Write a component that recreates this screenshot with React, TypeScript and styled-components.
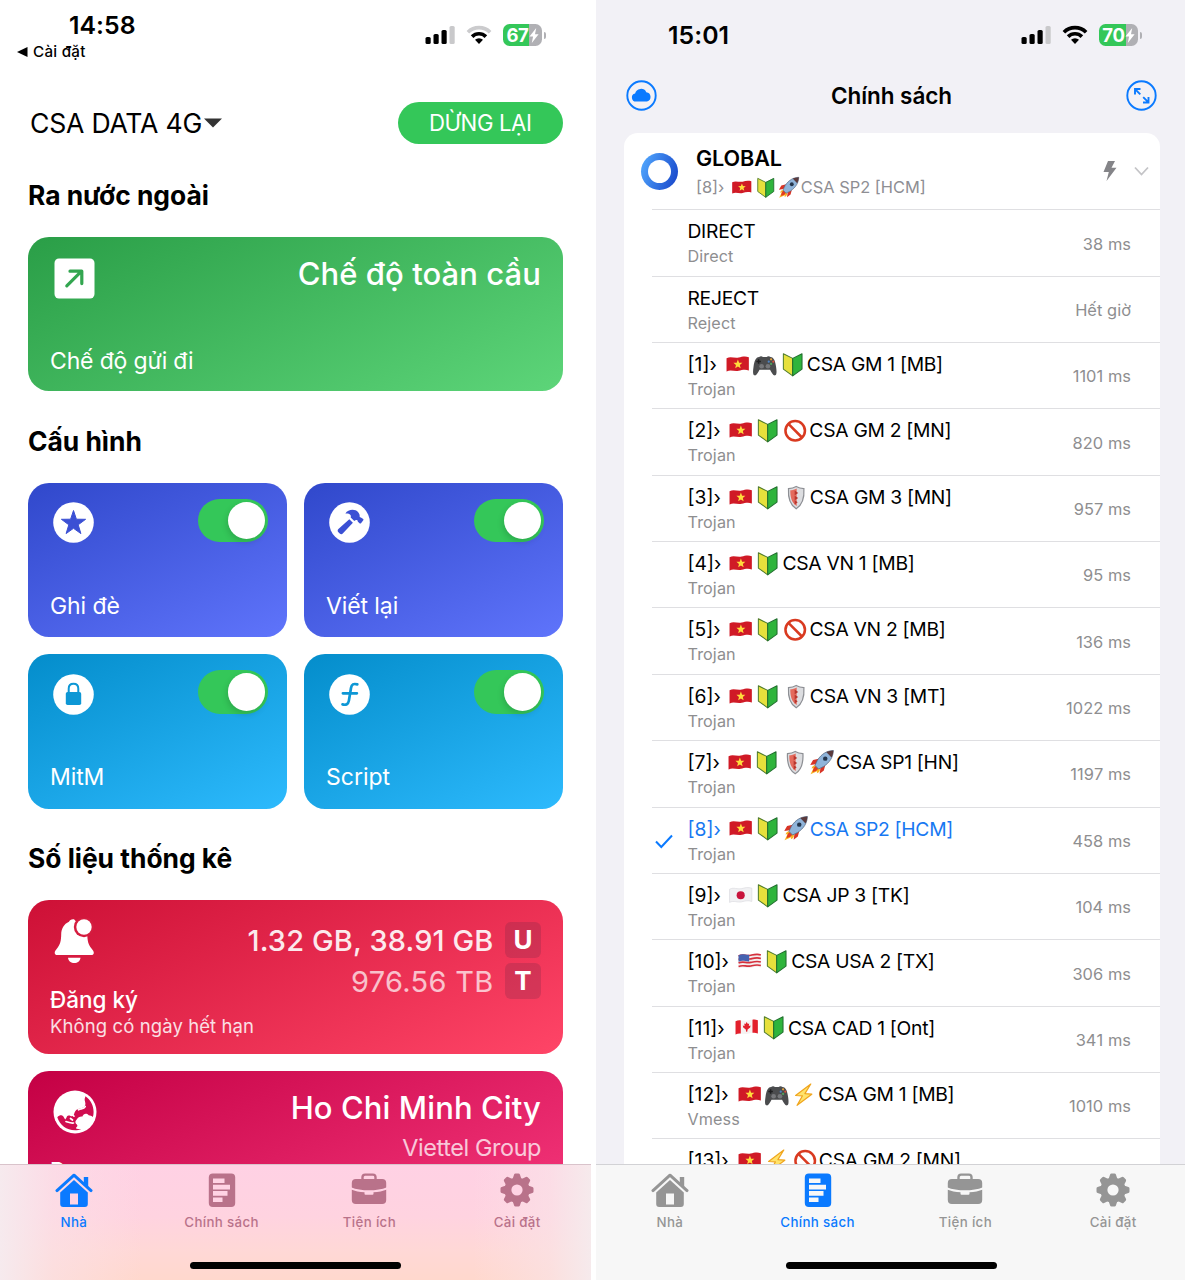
import React from "react";
import styled, { createGlobalStyle } from "styled-components";

const GlobalStyle = createGlobalStyle`
  * { box-sizing: border-box; }
  body {
    margin: 0;
    background: #fff;
    font-family: Inter, "Noto Sans", sans-serif;
    color: #000;
    overflow: hidden;
  }
  svg { display: block; flex: none; }
`;

/* ---------- shared pieces ---------- */

interface TextProps {
  $size: number;
  $line: number;
  $weight?: number;
  $track?: number;
  $color?: string;
}

const Text = styled.div<TextProps>`
  font-size: ${(p) => p.$size}px;
  line-height: ${(p) => p.$line}px;
  font-weight: ${(p) => p.$weight ?? 400};
  letter-spacing: ${(p) => p.$track ?? 0}px;
  color: ${(p) => p.$color ?? "inherit"};
  white-space: nowrap;
`;

const Stage = styled.div`
  display: grid;
  grid-template-columns: 596px 589px;
  width: 1185px;
  height: 1280px;
  overflow: hidden;
`;

const Phone = styled.section<{ $bg: string; $width: number }>`
  display: flex;
  flex-direction: column;
  width: ${(p) => p.$width}px;
  height: 1280px;
  background: ${(p) => p.$bg};
`;

const Scroll = styled.div<{ $pad: string }>`
  flex: 1;
  min-height: 0;
  overflow: hidden;
  padding: ${(p) => p.$pad};
`;

const StatusBar = styled.header<{ $left: number; $right: number }>`
  display: flex;
  justify-content: space-between;
  height: 71px;
  padding: 0 ${(p) => p.$right}px 0 ${(p) => p.$left}px;
  flex: none;
`;

const StatusIcons = styled.div`
  display: flex;
  align-items: center;
  height: 70px;
`;

const Clock = styled.div<{ $pad: number }>`
  padding-top: ${(p) => p.$pad}px;
`;

const BackLink = styled.div`
  display: flex;
  align-items: center;
  gap: 5px;
  padding-top: 1px;
`;

const ClockInset = styled.div`
  padding-left: 52px;
`;

const Battery = styled.div<{ $level: number }>`
  display: flex;
  align-items: center;
  justify-content: center;
  width: 39px;
  height: 21.5px;
  border-radius: 6.5px;
  background: linear-gradient(
    90deg,
    #34c759 ${(p) => p.$level}%,
    #b0b0b4 ${(p) => p.$level}%
  );
  color: #fff;
`;

const BatteryCap = styled.div`
  width: 2.5px;
  height: 7px;
  margin-left: 1.5px;
  border-radius: 0 3px 3px 0;
  background: #b0b0b4;
`;

const Gap = styled.div<{ $w: number }>`
  width: ${(p) => p.$w}px;
`;

const SignalIcon = () => (
  <svg width="30" height="20" viewBox="0 0 30 20">
    <rect x="0.5" y="12" width="5.2" height="7" rx="1.6" />
    <rect x="8.5" y="9" width="5.2" height="10" rx="1.6" />
    <rect x="16.5" y="5" width="5.2" height="14" rx="1.6" />
    <rect x="24.5" y="1" width="5.2" height="18" rx="1.6" fill="#c9c9cb" />
  </svg>
);

const WifiIcon = ({ weak }: { weak?: boolean }) => (
  <svg width="26" height="20" viewBox="0 0 26 20" fill="none" strokeWidth="3.7">
    <path d="M1.9 7.2a15.8 15.8 0 0 1 22.2 0" stroke={weak ? "#cbcbcd" : "#000"} />
    <path d="M6.1 11.6a9.8 9.8 0 0 1 13.8 0" stroke="#000" />
    <path d="M9 14.8a5.8 5.8 0 0 1 8 0L13 19z" fill="#000" />
  </svg>
);

const ChargeBolt = () => (
  <svg width="10" height="15" viewBox="0 0 10 15" fill="#fff">
    <path d="M7.2 0 0.5 8.4h3.6L2.8 15l6.8-8.8H6z" />
  </svg>
);

const PhoneStatus = ({ level, weak }: { level: number; weak?: boolean }) => (
  <StatusIcons>
    <SignalIcon />
    <Gap $w={11} />
    <WifiIcon weak={weak} />
    <Gap $w={11} />
    <Battery $level={level}>
      <Text $size={18.5} $line={21} $weight={700} $track={-0.3}>{level}</Text>
      <ChargeBolt />
    </Battery>
    <BatteryCap />
  </StatusIcons>
);

/* ---------- tab bar ---------- */

const TabBar = styled.nav<{ $tinted?: boolean }>`
  display: flex;
  flex-direction: column;
  align-items: center;
  flex: none;
  width: 591px;
  height: 116px;
  border-top: 1px solid ${(p) => (p.$tinted ? "#d9c3cb" : "#d2d2d5")};
  background: ${(p) =>
    p.$tinted
      ? `linear-gradient(90deg, #f6eaee 0%, rgba(250,226,232,0.6) 9%, rgba(252,220,228,0) 24%, rgba(252,220,228,0) 80%, rgba(249,228,232,0.6) 93%, #f6eaec 100%),
         linear-gradient(180deg, #ffd1e4 0%, #ffd3e0 45%, #ffd8d6 75%, #ffd8cd 100%)`
      : "#f7f7f7"};
`;

const Tabs = styled.div`
  display: grid;
  grid-template-columns: repeat(4, 1fr);
  width: 100%;
  height: 97px;
`;

const Tab = styled.div<{ $color: string }>`
  display: flex;
  flex-direction: column;
  align-items: center;
  padding-top: 7px;
  color: ${(p) => p.$color};
`;

const HomeIndicator = styled.div`
  width: 211px;
  height: 7px;
  border-radius: 4px;
  background: #000;
`;

type TabIconProps = { hole: string };

const HouseIcon = ({ hole }: TabIconProps) => (
  <svg width="38" height="36" viewBox="0 0 38 36">
    <path d="M2 18.6 19 3.2l17 15.4" fill="none" stroke="currentColor" strokeWidth="3" strokeLinecap="round" strokeLinejoin="round" />
    <path d="M28.8 5h4.4v11l-4.4-4z" fill="currentColor" />
    <path d="M19 8 5.2 20.4V32a3 3 0 0 0 3 3h21.6a3 3 0 0 0 3-3V20.4z" fill="currentColor" />
    <rect x="15" y="21.5" width="8" height="11" fill={hole} />
  </svg>
);

const PolicyIcon = ({ hole }: TabIconProps) => (
  <svg width="28" height="36" viewBox="0 0 28 36">
    <rect x="0.8" y="1.5" width="26.4" height="33.5" rx="4" fill="currentColor" />
    <path d="M5 6.5h11.5v4.6H5zM5 12.8h17v4.6H5zM5 19.1h14.5v4.6H5zM5 25.4h9.5V30H5z" fill={hole} />
  </svg>
);

const ToolsIcon = ({ hole }: TabIconProps) => (
  <svg width="36" height="36" viewBox="0 0 36 36">
    <path d="M11.5 8V5.2a2.6 2.6 0 0 1 2.6-2.6h7.8a2.6 2.6 0 0 1 2.6 2.6V8" fill="none" stroke="currentColor" strokeWidth="2.4" />
    <rect x="0.8" y="7" width="34.4" height="25" rx="4" fill="currentColor" />
    <path d="M0 15.2C10 19.4 26 19.4 36 15.2v2.2c-4 1.6-8.6 2.5-13.5 2.8v1.6a1 1 0 0 1-1 1h-7a1 1 0 0 1-1-1v-1.6C8.6 19.9 4 19 0 17.4z" fill={hole} />
  </svg>
);

const GearIcon = ({ hole }: TabIconProps) => (
  <svg width="36" height="36" viewBox="-18 -18 36 36" fill="currentColor">
    <circle r="12.6" />
    {[0, 45, 90, 135].map((deg) => (
      <path key={deg} transform={`rotate(${deg})`} d="M-4.4 -11 -2.9 -15.4a1.5 1.5 0 0 1 1.5-1.1h2.8a1.5 1.5 0 0 1 1.5 1.1L4.4-11V11L2.9 15.4a1.5 1.5 0 0 1-1.5 1.1h-2.8a1.5 1.5 0 0 1-1.5-1.1L-4.4 11z" />
    ))}
    <circle r="5.6" fill={hole} />
  </svg>
);

const tabs = [
  { label: "Nhà", Icon: HouseIcon },
  { label: "Chính sách", Icon: PolicyIcon },
  { label: "Tiện ích", Icon: ToolsIcon },
  { label: "Cài đặt", Icon: GearIcon },
];

const BottomTabs = ({ active, tinted }: { active: number; tinted?: boolean }) => (
  <TabBar $tinted={tinted}>
    <Tabs>
      {tabs.map(({ label, Icon }, i) => (
        <Tab key={label} $color={i === active ? "#0a7aff" : tinted ? "#b9728a" : "#959595"}>
          <Icon hole={tinted ? "#ffd3e4" : "#f7f7f7"} />
          <Text $size={13.3} $line={28} $weight={500} $track={0.35}>{label}</Text>
        </Tab>
      ))}
    </Tabs>
    <HomeIndicator />
  </TabBar>
);

/* ---------- home screen ---------- */

const TopRow = styled.div`
  display: flex;
  align-items: center;
  justify-content: space-between;
  height: 42px;
  padding-left: 2px;
`;

const Profile = styled.div`
  display: flex;
  align-items: center;
  gap: 2px;
`;

const StopButton = styled.button`
  display: flex;
  align-items: center;
  justify-content: center;
  width: 165.5px;
  height: 42px;
  padding: 0;
  border: 0;
  border-radius: 21px;
  background: #34c759;
  font-family: inherit;
  color: #fff;
`;

const Heading = styled.h2<{ $top: number }>`
  margin: ${(p) => p.$top}px 0 0;
  height: 57px;
  font-size: 26.4px;
  line-height: 30px;
  font-weight: 700;
  letter-spacing: -0.02px;
  white-space: nowrap;
`;

const Card = styled.article<{ $from: string; $to: string }>`
  display: flex;
  justify-content: space-between;
  height: 154.5px;
  border-radius: 21px;
  color: #fff;
  background: linear-gradient(155deg, ${(p) => p.$from}, ${(p) => p.$to});
`;

const LocationCard = styled(Card)`
  margin-top: 17px;
`;

const CardSide = styled.div<{ $pad: string; $end?: boolean }>`
  display: flex;
  flex-direction: column;
  flex-shrink: ${(p) => (p.$end ? 0 : 1)};
  min-width: 0;
  justify-content: space-between;
  align-items: ${(p) => (p.$end ? "flex-end" : "flex-start")};
  padding: ${(p) => p.$pad};
`;

const CardGrid = styled.div`
  display: grid;
  grid-template-columns: 1fr 1fr;
  gap: 17px;
`;

const Stack = styled.div`
  display: flex;
  flex-direction: column;
`;

const IconSlot = styled.div`
  padding-left: 3px;
`;

const Toggle = styled.div`
  display: flex;
  justify-content: flex-end;
  align-items: center;
  width: 70.5px;
  height: 43.5px;
  padding: 0 3px;
  border-radius: 22px;
  background: #34c759;
`;

const Knob = styled.div`
  width: 37.5px;
  height: 37.5px;
  border-radius: 50%;
  background: #fff;
  box-shadow: -1px 3px 6px rgba(0, 0, 0, 0.15);
`;

const Dim = styled.div<{ $opacity: number }>`
  opacity: ${(p) => p.$opacity};
`;

const UsageRow = styled.div`
  display: flex;
  align-items: center;
  justify-content: flex-end;
  gap: 11.5px;
  height: 41.3px;
`;

const UsageBadge = styled.div`
  display: flex;
  align-items: center;
  justify-content: center;
  width: 36px;
  height: 36px;
  border-radius: 6px;
  background: rgba(120, 40, 70, 0.26);
`;

const ProviderLine = styled.div`
  display: flex;
  justify-content: flex-end;
  opacity: 0.75;
`;

const ArrowIcon = () => (
  <svg width="42" height="41" viewBox="0 0 42 41">
    <rect x="1.5" y="0.5" width="40" height="40" rx="4.5" fill="#fff" />
    <path d="M13.8 27.8 27.8 13.8M17 13.2h11.8v12.4" fill="none" stroke="#33a650" strokeWidth="3.2" strokeLinecap="round" strokeLinejoin="round" />
  </svg>
);

const StarIcon = () => (
  <svg width="41" height="41" viewBox="0 0 41 41">
    <circle cx="20.5" cy="20.5" r="20.3" fill="#fff" />
    <path d="m20.5 8.5 2.9 8.7 9.2.1-7.4 5.5 2.7 8.8-7.4-5.3-7.4 5.3 2.7-8.8-7.4-5.5 9.2-.1z" fill="#3b50d4" stroke="#3b50d4" strokeLinejoin="round" />
  </svg>
);

const HammerIcon = () => (
  <svg width="41" height="41" viewBox="0 0 41 41">
    <circle cx="20.5" cy="20.5" r="20.3" fill="#fff" />
    <g fill="#3b50d4">
      <path d="M16.4 11.5c2.6-4.2 9.4-5.1 12.8-1.3 1.3 1.5 1.6 3.2 1.5 4.7l1.6.8 1.9 1.3c.4.3.4.8.1 1.2L32 21.3c-.3.4-.9.4-1.2.1l-1.9-1.7-.5-1.4c-.9-.4-2.1-.3-3.1.6l-3.6-3.5c.7-2-.6-4.2-5.3-3.9z" />
      <path d="m20.3 17.2 3.6 3.5L14 31.3c-1 1.1-2.3 1.1-3.3.2l-1.3-1.2c-1-.9-1-2.3 0-3.3z" />
    </g>
  </svg>
);

const LockIcon = () => (
  <svg width="41" height="41" viewBox="0 0 41 41">
    <circle cx="20.5" cy="20.5" r="20.3" fill="#fff" />
    <rect x="12.8" y="18" width="15.4" height="13" rx="1.8" fill="#0d97d5" />
    <path d="M15.7 19v-4.3c0-3 2-4.9 4.8-4.9s4.8 1.9 4.8 4.9V19" fill="none" stroke="#0d97d5" strokeWidth="2" />
  </svg>
);

const FunctionIcon = () => (
  <svg width="41" height="41" viewBox="0 0 41 41">
    <circle cx="20.5" cy="20.5" r="20.3" fill="#fff" />
    <path d="M28.3 10.4c-3.8-1-5.7-.2-6.3 3.6l-2.1 12.6c-.7 3.7-2.8 4.8-6.4 3.8M13.9 19.3h14" fill="none" stroke="#0d97d5" strokeWidth="2.7" strokeLinecap="round" />
  </svg>
);

const BellIcon = () => (
  <svg width="42" height="46" viewBox="0 0 42 46">
    <path d="M21 1.2c-2.6-.3-4.3.7-5 2.6C11 6 8.3 10.5 8.2 16.5c-.1 6.5-1 10-4.2 14-1.4 1.7-2.3 2.9-2.3 4.2 0 1.5 1 2.3 2.7 2.3h33.7c1.7 0 2.7-.8 2.7-2.3 0-1.3-.9-2.5-2.3-4.2-3.2-4-4.1-7.5-4.2-14.5z" fill="#fff" />
    <circle cx="31" cy="9" r="10.2" fill="#d51c3f" />
    <circle cx="31" cy="9" r="7.7" fill="#fff" />
    <path d="M15 39.7h12.5c-.4 3.3-3 5.3-6.2 5.3S15.4 43 15 39.7z" fill="#fff" />
  </svg>
);

const GlobeIcon = () => (
  <svg width="44" height="44" viewBox="0 0 44 44">
    <circle cx="22" cy="22" r="21.5" fill="#fff" />
    <path
      fill="#d00d50"
      d="M32.5 6.3c5 3.4 8.1 9.100 8.100 15.700 0 1.800-.2 3.400-.7 5-1.300-.9-2.600-1.700-4.200-1.700-2.700-3.100-5.500-.9-6.300 1.200-2.400-.3-4.400.6-5.300 2.600-.7 1.100-1.800 1.800-1.700 3.100.1 1.900 2.700 2.300 1.900 4-.4.8-1.500 1.100-1.200 2 .5 1 3 .7 5.200.7-2 .9-3.900 1.400-6.300 1.400C13.600 40.300 6.700 34.800 4.300 27.200c1.600-1.800 3.300-2.100 4.700-1.800 1.600.4 2.200 2.700 3.300 4 1.600-1.100 1.100-3.600 3.200-3.800 2.200-.2 2.600 1.500 4.200.4 2.100-1.500 1.500-4.700 3.900-6.200 3-1.800 7.400-1.300 8.600-4.600.9-2.500-1-4.500-.5-6.500z"
    />
    <path d="M25.5 19.8c1.800-1.600 5.200-.3 6.700-3.200M19.5 24.500l1.500 1.700M13 31.500c3 1 5 2 7.500 1.500M17.500 28.500l2 1.500" fill="none" stroke="#fff" strokeWidth="1.700" strokeLinecap="round" />
  </svg>
);

const toggles = [
  { label: "Ghi đè", Icon: StarIcon, from: "#3048cb", to: "#5f74fb", track: -0.1 },
  { label: "Viết lại", Icon: HammerIcon, from: "#3048cb", to: "#5f74fb", track: -0.1 },
  { label: "MitM", Icon: LockIcon, from: "#048dcb", to: "#2dbafd", track: -0.1 },
  { label: "Script", Icon: FunctionIcon, from: "#048dcb", to: "#2dbafd", track: 0 },
];

const HomeScreen = () => (
  <Phone $bg="#fff" $width={596}>
    <StatusBar $left={17} $right={50}>
      <Clock $pad={10}>
        <ClockInset>
          <Text $size={24.8} $line={30} $weight={600} $track={0.05}>14:58</Text>
        </ClockInset>
        <BackLink>
          <svg width="11" height="10" viewBox="0 0 11 10"><path d="M0 5 10.5 0v10z" /></svg>
          <Text $size={15.2} $line={22} $weight={500} $track={0.25}>Cài đặt</Text>
        </BackLink>
      </Clock>
      <PhoneStatus level={67} weak />
    </StatusBar>
    <Scroll $pad="31px 33px 0 28px">
      <TopRow>
        <Profile>
          <Text $size={26.6} $line={42} $track={-0.22}>CSA DATA 4G</Text>
          <svg width="18" height="10" viewBox="0 0 18 10"><path d="M0 .5h18L9 9.5z" fill="#333" /></svg>
        </Profile>
        <StopButton><Text $size={22.2} $line={42} $track={-0.4}>DỪNG LẠI</Text></StopButton>
      </TopRow>
      <Heading $top={35.5}>Ra nước ngoài</Heading>
      <Card $from="#2a9e47" $to="#5dd579">
        <CardSide $pad="21px 0 14px 22px">
          <IconSlot><ArrowIcon /></IconSlot>
          <Text $size={23} $line={32} $track={-0.15}>Chế độ gửi đi</Text>
        </CardSide>
        <CardSide $pad="17px 22px 0 0" $end>
          <Text $size={31} $line={40} $weight={500} $track={0.07}>Chế độ toàn cầu</Text>
        </CardSide>
      </Card>
      <Heading $top={34.5}>Cấu hình</Heading>
      <CardGrid>
        {toggles.map(({ label, Icon, from, to, track }) => (
          <Card key={label} $from={from} $to={to}>
            <CardSide $pad="19.5px 0 15.5px 22px">
              <IconSlot><Icon /></IconSlot>
              <Text $size={23} $line={32} $track={track}>{label}</Text>
            </CardSide>
            <CardSide $pad="16px 19px 0 0" $end>
              <Toggle><Knob /></Toggle>
            </CardSide>
          </Card>
        ))}
      </CardGrid>
      <Heading $top={34}>Số liệu thống kê</Heading>
      <Stack>
        <Card $from="#cd1036" $to="#ff4567">
          <CardSide $pad="18px 0 15.5px 22px">
            <IconSlot><BellIcon /></IconSlot>
            <Stack>
              <Text $size={22.5} $line={27} $weight={500}>Đăng ký</Text>
              <Dim $opacity={0.85}><Text $size={18.5} $line={26} $track={0.1}>Không có ngày hết hạn</Text></Dim>
            </Stack>
          </CardSide>
          <CardSide $pad="20px 22px 0 0" $end>
            <Stack>
              <UsageRow>
                <Dim $opacity={0.9}><Text $size={29} $line={41} $weight={500} $track={0.12}>1.32 GB, 38.91 GB</Text></Dim>
                <UsageBadge><Text $size={26} $line={38} $weight={700}>U</Text></UsageBadge>
              </UsageRow>
              <UsageRow>
                <Dim $opacity={0.7}><Text $size={29} $line={41} $track={0.3}>976.56 TB</Text></Dim>
                <UsageBadge><Text $size={26} $line={38} $weight={700}>T</Text></UsageBadge>
              </UsageRow>
            </Stack>
          </CardSide>
        </Card>
        <LocationCard $from="#c40044" $to="#f6387c">
          <CardSide $pad="19px 0 14.5px 22px">
            <IconSlot><GlobeIcon /></IconSlot>
            <Stack>
              <Text $size={22.5} $line={28} $weight={500}>Proxy</Text>
              <Text $size={18.5} $line={26}>&nbsp;</Text>
            </Stack>
          </CardSide>
          <CardSide $pad="17px 22px 0 0" $end>
            <Stack>
              <Text $size={31} $line={40} $weight={500} $track={0.1}>Ho Chi Minh City</Text>
              <ProviderLine>
                <Text $size={23.4} $line={39} $track={-0.4}>Viettel Group</Text>
              </ProviderLine>
            </Stack>
          </CardSide>
        </LocationCard>
      </Stack>
    </Scroll>
    <BottomTabs active={0} tinted />
  </Phone>
);

/* ---------- policy screen ---------- */

type Glyph = "vn" | "jp" | "us" | "ca" | "badge" | "pad" | "ban" | "shield" | "rocket" | "bolt";

const flagShape = "M2.5 6.6C7 4.4 10 7 14.500 6c3-.7 6-1.700 10-.4v13c-4-1.300-7-.3-10 .4-4.500 1-7.500-1.600-12 .6z";

const glyphs: Record<Glyph, React.ReactNode> = {
  vn: (
    <>
      <path d={flagShape} fill="#d01a26" />
      <path d="m13.7 8 1.2 3 3.2.2-2.5 2.1.8 3.1-2.7-1.700-2.700 1.700.8-3.100-2.500-2.100 3.200-.2z" fill="#ffdc3c" />
    </>
  ),
  jp: (
    <>
      <path d={flagShape} fill="#f1f1f3" stroke="#d8d8dc" strokeWidth=".6" />
      <circle cx="13.5" cy="12.6" r="4" fill="#c8143c" />
    </>
  ),
  us: (
    <>
      <path d={flagShape} fill="#f4eeee" />
      <path d="M2.5 7.3C7 5.1 10 7.7 14.5 6.7c3-.7 6-1.7 10-.4M2.5 10.8C7 8.6 10 11.2 14.5 10.2c3-.7 6-1.7 10-.4M2.5 14.3c4.500-2.200 7.500.4 12-.6 3-.7 6-1.700 10-.4M2.5 17.8c4.500-2.200 7.500.4 12-.6 3-.7 6-1.700 10-.4" stroke="#d5303c" strokeWidth="1.6" fill="none" />
      <path d="M2.5 6.6c4-1.9 6.5-.2 10.5-.4v6.5c-4 .2-6.5-1.5-10.5.4z" fill="#4562b0" />
    </>
  ),
  ca: (
    <>
      <path d={flagShape} fill="#f6f2f2" />
      <path d="M2.5 6.6c1.8-.8 3.4-1 5.2-.8v13c-1.8-.2-3.4 0-5.2.8zM19.2 5.1c1.7-.3 3.3-.2 5.3.5v13c-2-.7-3.6-.7-5.3-.5z" fill="#e3202c" />
      <path d="m13.5 7.5 1.2 1.9 1.2-.5-.3 2.500 1.700-.5-.4 2-2.500 2-.4 2h-1l-.4-2-2.500-2-.4-2 1.700.5-.3-2.500 1.200.5z" fill="#e3202c" />
    </>
  ),
  badge: (
    <>
      <path d="M4.3 2.2 13.5 6.8V24L4.3 17.3z" fill="#e6e03c" stroke="#4d7a2a" strokeWidth="1" strokeLinejoin="round" />
      <path d="M22.7 2.2 13.5 6.8V24l9.2-6.7z" fill="#2fb43c" stroke="#1f6d2c" strokeWidth="1" strokeLinejoin="round" />
    </>
  ),
  pad: (
    <>
      <path d="M8 5.5c1.3-1.5 3-1 3.7 0h3.8c.7-1 2.4-1.5 3.7 0 3.4.5 4.6 3.5 5.500 9.500.7 4.500.8 8-.9 8.500-1.800.6-3.500-2.500-5-5.500H8.400c-1.500 3-3.200 6.100-5 5.500-1.700-.5-1.600-4-.9-8.500.9-6 2.100-9 5.500-9.500z" fill="#4b4c4e" />
      <path d="M7.5 7.6v4.400M5.3 9.800h4.400" stroke="#1f1f21" strokeWidth="1.5" />
      <circle cx="10.5" cy="14.5" r="2.3" fill="#77787b" />
      <circle cx="16.7" cy="14.5" r="2.3" fill="#77787b" />
      <circle cx="19.8" cy="7.7" r="1.1" fill="#e7a33e" />
      <circle cx="17.5" cy="10" r="1.1" fill="#4d83c4" />
      <circle cx="22" cy="10" r="1.1" fill="#d8503c" />
      <circle cx="19.8" cy="12.2" r="1.1" fill="#50a35a" />
    </>
  ),
  ban: (
    <>
      <circle cx="14" cy="13" r="9.6" fill="#fff" fillOpacity=".4" stroke="#d93a20" strokeWidth="2.5" />
      <path d="m7.3 6.3 13.4 13.4" stroke="#d93a20" strokeWidth="2.5" />
    </>
  ),
  shield: (
    <>
      <path d="M14 2c2.500 1.500 5 2 7.600 2 .5 8-1.200 16-7.600 20C7.600 20 5.900 12 6.400 4c2.600 0 5.100-.5 7.600-2z" fill="#dcdde0" stroke="#8d8f94" strokeWidth="1.2" />
      <path d="M14.5 4v17.300C9.3 17.800 8 11.800 8.200 5.700c2.200 0 4.300-.5 6.300-1.700z" fill="#e46a5c" />
      <path d="m12.5 6 3.500 2.300-3.500 2.300zM12.500 11l3.500 2.300-3.500 2.300zM12.500 15.600l3 2-3 2z" fill="#b8372f" />
    </>
  ),
  rocket: (
    <>
      <path d="M7.5 15.5c-2.500 0-3.500 1.500-4 3.300l2-.5-3 6.200 6.500-3-.3 2c2.500-.8 3.300-2.500 3-4.500z" fill="#f9b423" />
      <path d="M7.5 16.5c-2 .8-2.300 3.500-3 5.800 2.500-.6 4.500-1.200 5.500-3.300z" fill="#e23b20" />
      <path d="M10.500 9 5 10.300 2.200 15.200l5.300-.7zM17 15.500 15.600 20.800 11.500 24l.7-5.500z" fill="#d83426" />
      <path d="M25 1c-6.500.3-11.500 3.200-15.700 9.500L6.900 15.700l3.500 3.500 5.100-2.500C21.700 12.500 24.700 7.500 25 1z" fill="#8fb4da" stroke="#4d5f78" strokeWidth=".7" />
      <path d="M25 1c-2.600.1-5 .6-7 1.500l5.200 5.300C24.300 5.800 24.900 3.500 25 1z" fill="#5b3a3c" />
      <circle cx="17" cy="9" r="2.2" fill="#25364c" />
    </>
  ),
  bolt: <path d="M20.5 2.5 5.500 13.800l6.800.3-5.300 9.400 14.500-11-6.800-.6z" fill="#ffe36a" stroke="#f0a51e" strokeWidth="1.2" strokeLinejoin="round" />,
};

const GlyphIcon = ({ name, size }: { name: Glyph; size: number }) => (
  <svg width={size} height={size} viewBox="0 0 27 26">{glyphs[name]}</svg>
);

const NavBar = styled.div`
  display: flex;
  align-items: center;
  justify-content: space-between;
  height: 49px;
  padding: 0 28px 0 30px;
  flex: none;
`;

const PolicyCard = styled.div`
  width: 536px;
  border-radius: 14px 14px 0 0;
  background: #fff;
`;

const GroupHeader = styled.div`
  display: flex;
  align-items: flex-start;
  height: 76.3px;
  padding: 0 11px 0 17px;
`;

const GroupRing = styled.div`
  width: 37px;
  height: 37px;
  margin: 20px 18px 0 0;
  padding: 7px;
  border-radius: 50%;
  background: linear-gradient(110deg, #4ea2fb 10%, #1b4ccd 90%);
`;

const RingHole = styled.div`
  width: 23px;
  height: 23px;
  border-radius: 50%;
  background: #fff;
`;

const GroupText = styled.div`
  flex: 1;
  padding-top: 11px;
`;

const GroupActions = styled.div`
  display: flex;
  align-items: center;
  gap: 17px;
  height: 76px;
`;

const RowList = styled.ul`
  margin: 0;
  padding: 0 0 0 28px;
  list-style: none;
`;

const Row = styled.li`
  display: flex;
  height: 66.36px;
  padding-right: 29px;
  border-top: 1px solid #dfdfe2;
`;

const CheckSlot = styled.div`
  width: 35.5px;
  padding: 26px 0 0 3px;
  flex: none;
`;

const RowBody = styled.div`
  flex: 1;
  padding-top: 9px;
`;

const Latency = styled.div`
  display: flex;
  align-items: center;
  height: 66.5px;
  font-kerning: none;
`;

const NameLine = styled.div<{ $h: number }>`
  display: flex;
  align-items: center;
  height: ${(p) => p.$h}px;
`;

const Prefix = styled.div<{ $w: number }>`
  width: ${(p) => p.$w}px;
  font-kerning: none;
`;

const NameText = styled(Text)<{ $afterIcons: boolean }>`
  padding-left: ${(p) => (p.$afterIcons ? 0.7 : 0)}px;
`;

interface Policy {
  prefix?: string;
  prefixWidth?: number;
  icons?: Glyph[];
  name: string;
  kind: string;
  ms: string;
  active?: boolean;
}

const policies: Policy[] = [
  { name: "DIRECT", kind: "Direct", ms: "38 ms" },
  { name: "REJECT", kind: "Reject", ms: "Hết giờ" },
  { prefix: "[1]›", prefixWidth: 36.5, icons: ["vn", "pad", "badge"], name: "CSA GM 1 [MB]", kind: "Trojan", ms: "1101 ms" },
  { prefix: "[2]›", prefixWidth: 39, icons: ["vn", "badge", "ban"], name: "CSA GM 2 [MN]", kind: "Trojan", ms: "820 ms" },
  { prefix: "[3]›", prefixWidth: 39.5, icons: ["vn", "badge", "shield"], name: "CSA GM 3 [MN]", kind: "Trojan", ms: "957 ms" },
  { prefix: "[4]›", prefixWidth: 39.5, icons: ["vn", "badge"], name: "CSA VN 1 [MB]", kind: "Trojan", ms: "95 ms" },
  { prefix: "[5]›", prefixWidth: 39.2, icons: ["vn", "badge", "ban"], name: "CSA VN 2 [MB]", kind: "Trojan", ms: "136 ms" },
  { prefix: "[6]›", prefixWidth: 39.5, icons: ["vn", "badge", "shield"], name: "CSA VN 3 [MT]", kind: "Trojan", ms: "1022 ms" },
  { prefix: "[7]›", prefixWidth: 38.3, icons: ["vn", "badge", "shield", "rocket"], name: "CSA SP1 [HN]", kind: "Trojan", ms: "1197 ms" },
  { prefix: "[8]›", prefixWidth: 39.5, icons: ["vn", "badge", "rocket"], name: "CSA SP2 [HCM]", kind: "Trojan", ms: "458 ms", active: true },
  { prefix: "[9]›", prefixWidth: 39.5, icons: ["jp", "badge"], name: "CSA JP 3 [TK]", kind: "Trojan", ms: "104 ms" },
  { prefix: "[10]›", prefixWidth: 48.2, icons: ["us", "badge"], name: "CSA USA 2 [TX]", kind: "Trojan", ms: "306 ms" },
  { prefix: "[11]›", prefixWidth: 45, icons: ["ca", "badge"], name: "CSA CAD 1 [Ont]", kind: "Trojan", ms: "341 ms" },
  { prefix: "[12]›", prefixWidth: 48, icons: ["vn", "pad", "bolt"], name: "CSA GM 1 [MB]", kind: "Vmess", ms: "1010 ms" },
  { prefix: "[13]›", prefixWidth: 48.5, icons: ["vn", "bolt", "ban"], name: "CSA GM 2 [MN]", kind: "Vmess", ms: "" },
];

const CloudButton = () => (
  <svg width="31" height="31" viewBox="0 0 31 31">
    <circle cx="15.5" cy="15.5" r="14.2" fill="none" stroke="#0a7aff" strokeWidth="1.9" />
    <path d="M10 21.6a4.100 4.100 0 0 1-.9-8.100 6 6 0 0 1 11.200-1.300 4.800 4.800 0 0 1 .7 9.400z" fill="#0a7aff" />
  </svg>
);

const ExpandButton = () => (
  <svg width="31" height="31" viewBox="0 0 31 31" fill="none" stroke="#0a7aff" strokeWidth="1.9">
    <circle cx="15.5" cy="15.5" r="14.2" />
    <path d="m9.300 9.300 5 5M9 14.500V9h5.500M22.200 22.200l-5-5M22.500 17v5.500H17" />
  </svg>
);

const PolicyScreen = () => (
  <Phone $bg="#f2f1f6" $width={589}>
    <StatusBar $left={72} $right={43}>
      <Clock $pad={20}>
        <Text $size={24.8} $line={31} $weight={600} $track={0.05}>15:01</Text>
      </Clock>
      <PhoneStatus level={70} />
    </StatusBar>
    <NavBar>
      <CloudButton />
      <Text $size={22.5} $line={49} $weight={600} $track={-0.05}>Chính sách</Text>
      <ExpandButton />
    </NavBar>
    <Scroll $pad="13px 0 0 28px">
      <PolicyCard>
        <GroupHeader>
          <GroupRing><RingHole /></GroupRing>
          <GroupText>
            <Text $size={21.6} $line={29} $weight={600} $track={-0.1}>GLOBAL</Text>
            <NameLine $h={29}>
              <Prefix $w={34.3}><Text $size={16.4} $line={29} $color="#8e8e93">[8]›</Text></Prefix>
              <GlyphIcon name="vn" size={23.5} />
              <GlyphIcon name="badge" size={23.5} />
              <GlyphIcon name="rocket" size={23.5} />
              <Text $size={16.4} $line={29} $color="#8e8e93">CSA SP2 [HCM]</Text>
            </NameLine>
          </GroupText>
          <GroupActions>
            <svg width="14" height="20" viewBox="0 0 14 20"><path d="M5 0h7L8.5 6.8h5L3.5 20l2.300-9H.5z" fill="#848488" /></svg>
            <svg width="15" height="10" viewBox="0 0 15 10"><path d="m1 1.5 6.5 7 6.5-7" fill="none" stroke="#c4c4c7" strokeWidth="1.8" /></svg>
          </GroupActions>
        </GroupHeader>
        <RowList>
          {policies.map((p) => (
            <Row key={p.prefix ?? p.name}>
              <CheckSlot>
                {p.active && (
                  <svg width="18" height="15" viewBox="0 0 18 15"><path d="m1 7.5 5.3 5.5L17 1.5" fill="none" stroke="#0a7aff" strokeWidth="2" /></svg>
                )}
              </CheckSlot>
              <RowBody>
                <NameLine $h={25}>
                  {p.prefix && (
                    <Prefix $w={p.prefixWidth ?? 39}>
                      <Text $size={19.3} $line={25} $color={p.active ? "#1778f2" : "#000"}>{p.prefix}</Text>
                    </Prefix>
                  )}
                  {p.icons?.map((icon) => <GlyphIcon key={icon} name={icon} size={27.4} />)}
                  <NameText
                    $afterIcons={Boolean(p.icons)}
                    $size={19.3}
                    $line={25}
                    $track={-0.29}
                    $color={p.active ? "#1778f2" : "#000"}
                  >
                    {p.name}
                  </NameText>
                </NameLine>
                <Text $size={16.2} $line={24} $track={0.1} $color="#8e8e90">{p.kind}</Text>
              </RowBody>
              <Latency>
                <Text $size={16.4} $line={24} $track={0.05} $color="#8e8e90">{p.ms}</Text>
              </Latency>
            </Row>
          ))}
        </RowList>
      </PolicyCard>
    </Scroll>
    <BottomTabs active={1} />
  </Phone>
);

const App = () => (
  <>
    <GlobalStyle />
    <Stage>
      <HomeScreen />
      <PolicyScreen />
    </Stage>
  </>
);

export default App;
